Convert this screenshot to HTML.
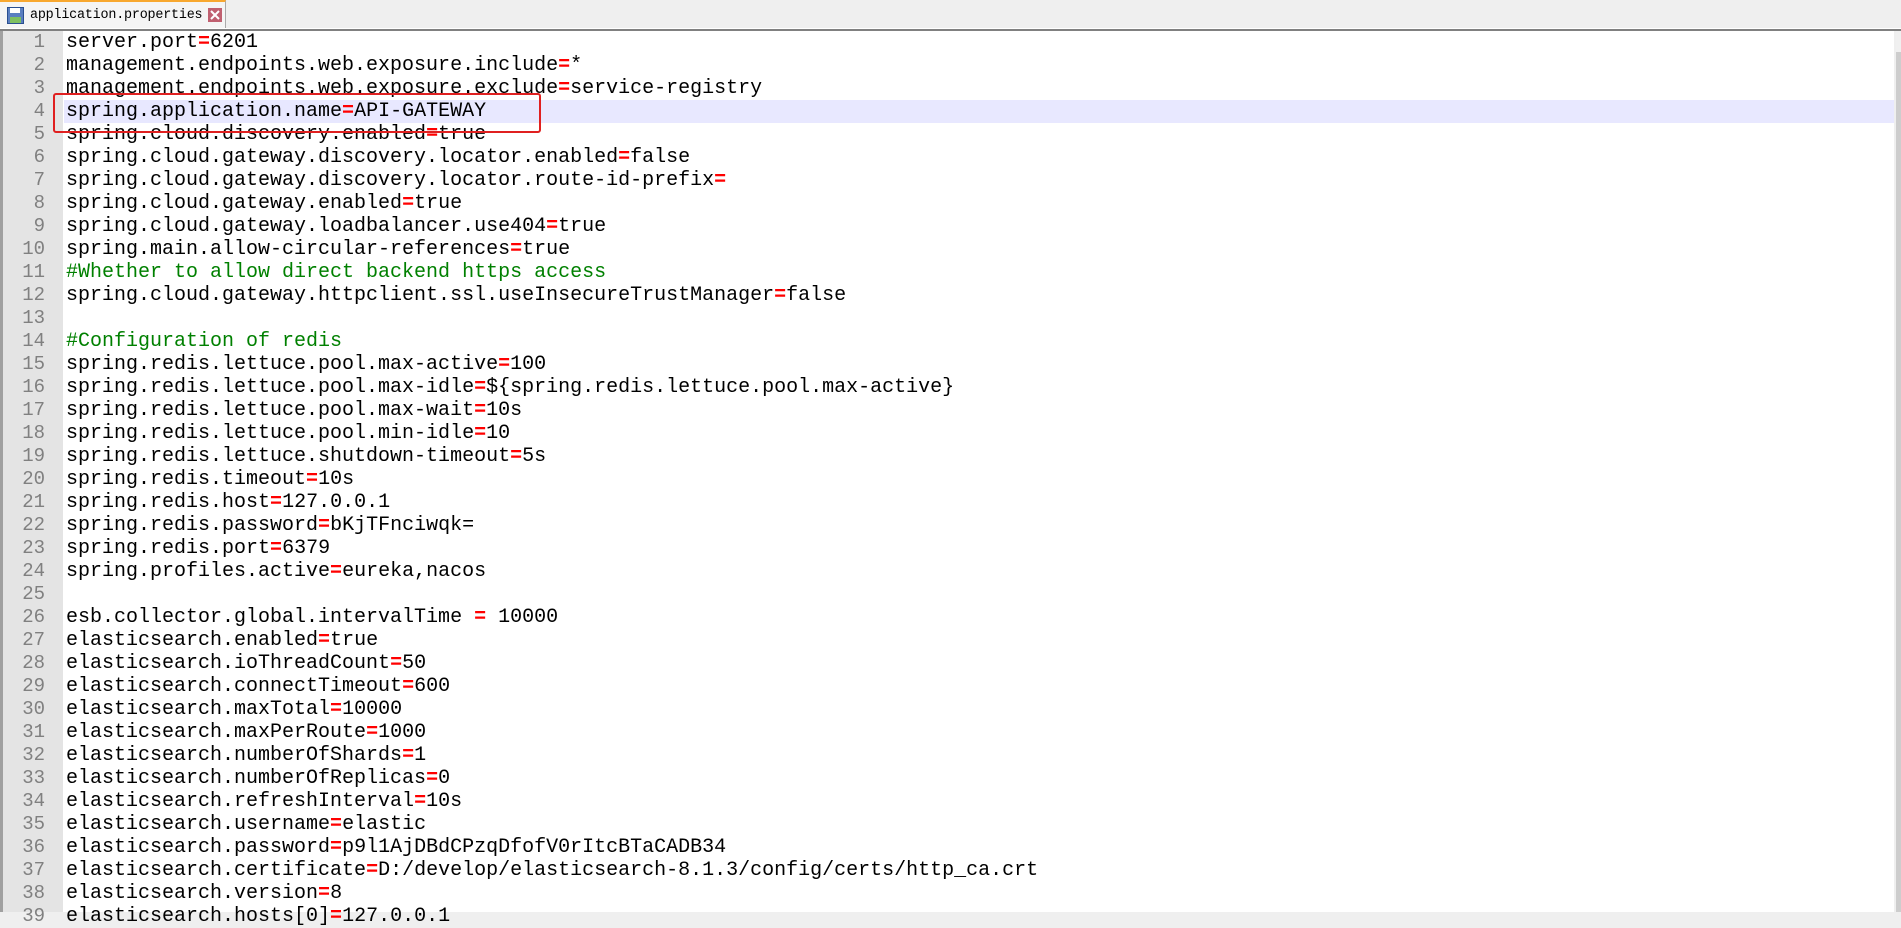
<!DOCTYPE html><html><head><style>
body{margin:0;width:1901px;height:912px;background:#efefef;overflow:hidden;position:relative;font-family:"Liberation Mono",monospace}
#tabbar{position:absolute;left:0;top:0;width:1901px;height:28px;background:#efefef;border-bottom:1px solid #fff}
#tab{position:absolute;left:0;top:0;width:226px;height:28px;background:#f5f5f5;border-top:2px solid #f8a830;border-right:1px solid #aaa;box-sizing:border-box}
#tab span{position:absolute;left:30px;top:6px;font-size:13.4px;color:#000;letter-spacing:-0.2px}
#sep{position:absolute;left:0;top:29px;width:1901px;height:2px;background:#808080}
#ed{position:absolute;left:3px;top:31px;width:1891px;height:881px;background:#fff}
#gut{position:absolute;left:3px;top:31px;width:60px;height:881px;background:#e4e4e4}
#gb{position:absolute;left:0;top:31px;width:3px;height:881px;background:#a0a0a0}
#sb{position:absolute;left:1896px;top:31px;width:5px;height:881px;background:#f0f0f0}
#sbt{position:absolute;left:1896px;top:52px;width:5px;height:860px;background:#cdcdcd}
.l{position:absolute;left:0;height:23px;line-height:23px;font-size:20px;white-space:pre;width:1892px}
.n{position:absolute;left:0;width:45px;text-align:right;color:#808080;font-size:19px;height:23px;line-height:23px}
.t{position:absolute;left:66px;color:#000}
.e{color:#f00;font-weight:bold}.c{color:#008000}
#hl{position:absolute;left:64px;top:100px;width:1830px;height:23px;background:#e8e8ff}
#box{position:absolute;left:53px;top:93px;width:484px;height:36px;border:2px solid #e02020;border-radius:3px}
</style></head><body>
<div id="tabbar"><div id="tab"><svg style="position:absolute;left:7px;top:5px" width="17" height="17"><rect x="0.5" y="0.5" width="16" height="16" fill="#5a7fc0" stroke="#2a4f90"/><rect x="3" y="1" width="10" height="5" fill="#fff"/><rect x="3" y="10" width="11" height="6" fill="#7fc060"/></svg><span>application.properties</span><svg style="position:absolute;left:208px;top:6px" width="14" height="14"><rect width="14" height="14" fill="#c06070"/><path d="M3 3L11 11M11 3L3 11" stroke="#fff" stroke-width="2"/></svg></div></div>
<div id="sep"></div>
<div id="ed"></div><div id="gut"></div><div id="gb"></div><div id="hl"></div>
<div id="sb"></div><div id="sbt"></div>
<div id="lines"></div>
<div id="box"></div>
<script>
var L=["server.port=6201","management.endpoints.web.exposure.include=*","management.endpoints.web.exposure.exclude=service-registry","spring.application.name=API-GATEWAY","spring.cloud.discovery.enabled=true","spring.cloud.gateway.discovery.locator.enabled=false","spring.cloud.gateway.discovery.locator.route-id-prefix=","spring.cloud.gateway.enabled=true","spring.cloud.gateway.loadbalancer.use404=true","spring.main.allow-circular-references=true","#Whether to allow direct backend https access","spring.cloud.gateway.httpclient.ssl.useInsecureTrustManager=false","","#Configuration of redis","spring.redis.lettuce.pool.max-active=100","spring.redis.lettuce.pool.max-idle=${spring.redis.lettuce.pool.max-active}","spring.redis.lettuce.pool.max-wait=10s","spring.redis.lettuce.pool.min-idle=10","spring.redis.lettuce.shutdown-timeout=5s","spring.redis.timeout=10s","spring.redis.host=127.0.0.1","spring.redis.password=bKjTFnciwqk=","spring.redis.port=6379","spring.profiles.active=eureka,nacos","","esb.collector.global.intervalTime = 10000","elasticsearch.enabled=true","elasticsearch.ioThreadCount=50","elasticsearch.connectTimeout=600","elasticsearch.maxTotal=10000","elasticsearch.maxPerRoute=1000","elasticsearch.numberOfShards=1","elasticsearch.numberOfReplicas=0","elasticsearch.refreshInterval=10s","elasticsearch.username=elastic","elasticsearch.password=p9l1AjDBdCPzqDfofV0rItcBTaCADB34","elasticsearch.certificate=D:/develop/elasticsearch-8.1.3/config/certs/http_ca.crt","elasticsearch.version=8","elasticsearch.hosts[0]=127.0.0.1"];
var h="";function esc(s){return s.replace(/&/g,"&amp;").replace(/</g,"&lt;")}
L.forEach(function(s,i){var y=31+i*23,c;
if(s[0]=="#")c='<span class="c">'+esc(s)+'</span>';else{var k=s.indexOf("=");c=k<0?esc(s):esc(s.slice(0,k))+'<span class="e">=</span>'+esc(s.slice(k+1));}
h+='<div class="l" style="top:'+y+'px"><span class="n">'+(i+1)+'</span><span class="t">'+c+'</span></div>';});
document.getElementById("lines").innerHTML=h;
</script>
</body></html>
